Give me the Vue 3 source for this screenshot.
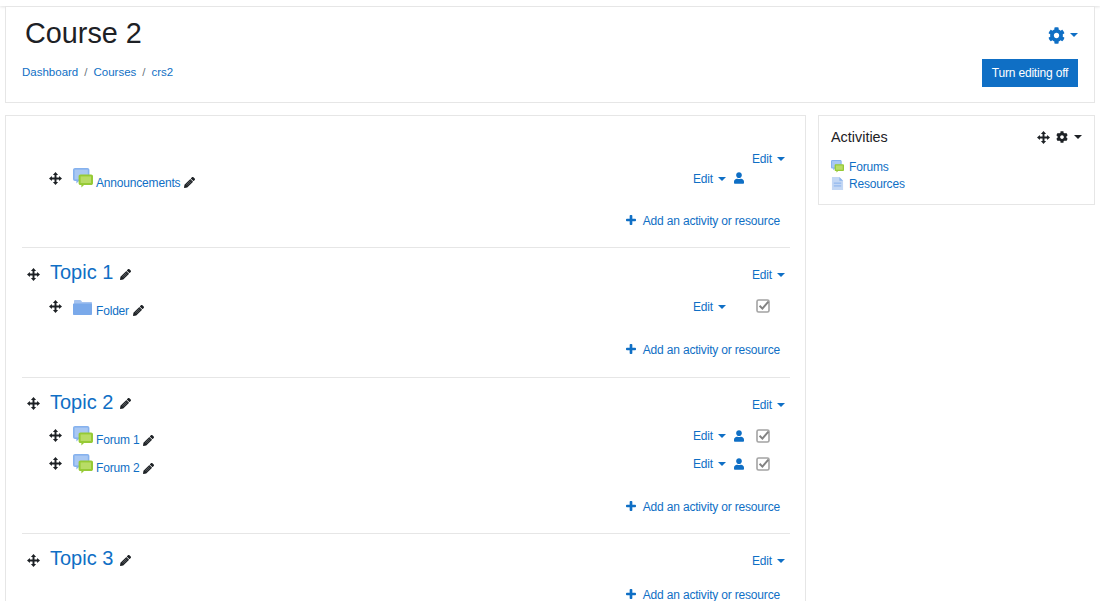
<script setup>
const sections = [
  { id: 0, title: '', acts: [{ name: 'Announcements', icon: 'forum', user: true, check: false }] },
  { id: 1, title: 'Topic 1', acts: [{ name: 'Folder', icon: 'folder', user: false, check: true }] },
  { id: 2, title: 'Topic 2', acts: [
    { name: 'Forum 1', icon: 'forum', user: true, check: true },
    { name: 'Forum 2', icon: 'forum', user: true, check: true }
  ] },
  { id: 3, title: 'Topic 3', acts: [] }
]
const crumbs = ['Dashboard', 'Courses', 'crs2']
</script>

<template>
  <div class="page">
    <svg class="defs" width="0" height="0" aria-hidden="true">
      <symbol id="i-cog" viewBox="0 0 512 512"><path d="M487.4 315.7l-42.6-24.6c4.3-23.2 4.3-47 0-70.2l42.6-24.6c4.9-2.8 7.1-8.6 5.5-14-11.1-35.6-30-67.8-54.7-94.6-3.8-4.1-10-5.1-14.8-2.3L380.8 110c-17.9-15.4-38.5-27.3-60.8-35.1V25.8c0-5.6-3.9-10.5-9.4-11.7-36.7-8.2-74.3-7.8-109.2 0-5.5 1.2-9.4 6.1-9.4 11.7V75c-22.2 7.9-42.8 19.8-60.8 35.1L88.7 85.5c-4.9-2.8-11-1.9-14.8 2.3-24.7 26.7-43.6 58.9-54.7 94.6-1.7 5.4.6 11.2 5.5 14L67.3 221c-4.3 23.2-4.3 47 0 70.2l-42.6 24.6c-4.9 2.8-7.1 8.6-5.5 14 11.1 35.6 30 67.8 54.7 94.6 3.8 4.1 10 5.1 14.8 2.3l42.6-24.6c17.9 15.4 38.5 27.3 60.8 35.1v49.2c0 5.6 3.9 10.5 9.4 11.7 36.7 8.2 74.3 7.8 109.2 0 5.5-1.2 9.4-6.1 9.4-11.7v-49.2c22.2-7.9 42.8-19.8 60.8-35.1l42.6 24.6c4.9 2.8 11 1.9 14.8-2.3 24.7-26.7 43.6-58.9 54.7-94.6 1.5-5.5-.7-11.3-5.6-14.1zM256 336c-44.1 0-80-35.9-80-80s35.9-80 80-80 80 35.9 80 80-35.9 80-80 80z"/></symbol>
      <symbol id="i-move" viewBox="0 0 24 24"><path d="M12 0l4.8 5.4h-3V10.2h4.8V7.2L24 12l-5.4 4.8v-3h-4.8v4.8h3L12 24l-4.8-5.4h3v-4.8H5.4v3L0 12l5.4-4.8v3h4.8V5.4h-3z"/></symbol>
      <symbol id="i-pencil" viewBox="0 0 512 512"><path d="M497.9 142.1l-46.1 46.1c-4.7 4.7-12.3 4.7-17 0l-111-111c-4.7-4.7-4.7-12.3 0-17l46.1-46.1c18.7-18.7 49.1-18.7 67.9 0l60.1 60.1c18.8 18.7 18.8 49.1 0 67.9zM284.2 99.8L21.6 362.4.4 483.9c-2.9 16.4 11.4 30.6 27.8 27.8l121.5-21.3 262.6-262.6c4.7-4.7 4.7-12.3 0-17l-111-111c-4.8-4.7-12.4-4.7-17.1 0z"/><path d="M110 360L300 170M150 400L340 210" stroke="#fff" stroke-width="22" fill="none" opacity=".55"/></symbol>
      <symbol id="i-user" viewBox="0 0 448 512"><path d="M224 256c70.7 0 128-57.3 128-128S294.7 0 224 0 96 57.3 96 128s57.3 128 128 128zm89.6 32h-16.7c-22.2 10.2-46.9 16-72.9 16s-50.6-5.8-72.9-16h-16.7C60.2 288 0 348.2 0 422.4V464c0 26.5 21.5 48 48 48h352c26.5 0 48-21.5 48-48v-41.6c0-74.2-60.2-134.4-134.4-134.4z"/></symbol>
      <symbol id="i-plus" viewBox="0 0 12 12"><path d="M4.4 1c0-.5.4-1 1-1h1.2c.6 0 1 .5 1 1v3.4H11c.5 0 1 .4 1 1v1.2c0 .6-.5 1-1 1H7.6V11c0 .5-.4 1-1 1H5.4c-.6 0-1-.5-1-1V7.6H1c-.5 0-1-.4-1-1V5.4c0-.6.5-1 1-1h3.4z"/></symbol>
      <symbol id="i-check" viewBox="0 0 14 14"><rect x="1" y="1" width="12" height="12" rx="1.6" fill="none" stroke="#a3a3a3" stroke-width="1.6"/><path d="M3.6 6.800l2.800 2.800 6-7" fill="none" stroke="#828282" stroke-width="2"/></symbol>
      <symbol id="i-forum" viewBox="0 0 20 20">
        <path d="M2 0h12.400c1.100 0 2 .9 2 2v9c0 1.100-.9 2-2 2H6l-2.600 2.600V13H2c-1.100 0-2-.9-2-2V2C0 .9.900 0 2 0z" fill="#86b2ee"/>
        <path d="M1.600 1.600h13.200v9.800H1.600z" fill="#a9c8f3"/>
        <path d="M7.400 6.400h10.800c1 0 1.800.8 1.800 1.800v7c0 1-.8 1.800-1.800 1.800H11L8.400 19.400V17H7.400c-1 0-1.800-.8-1.800-1.800v-7c0-1 .8-1.800 1.800-1.800z" fill="#96ca36"/>
        <rect x="7.600" y="8.400" width="10.400" height="6.600" fill="#b8dc66"/>
      </symbol>
      <symbol id="i-folder" viewBox="0 0 20 20">
        <path d="M1 5c0-.6.500-1 1-1h5c.5 0 .8.2 1.100.6l1 1.400h8.900c.6 0 1 .4 1 1v2H1z" fill="#a5c3f0"/>
        <path d="M1 7.600h17c.6 0 1 .4 1 1V18c0 .6-.4 1-1 1H1c-.6 0-1-.4-1-1V8.600c0-.6.4-1 1-1z" fill="#7aa9ea"/>
      </symbol>
      <symbol id="i-res" viewBox="0 0 14 14">
        <path d="M1 0h8l4 4v10H1z" fill="#c3d7f4"/>
        <path d="M9 0v4h4z" fill="#8db4ec"/>
        <rect x="3" y="6" width="8" height="1.200" fill="#8db4ec"/>
        <rect x="3" y="9" width="8" height="1.200" fill="#8db4ec"/>
      </symbol>
    </svg>

    <div class="topbar"></div>

    <header class="card head">
      <div class="head-left">
        <h1 class="course">Course 2</h1>
        <nav class="crumbs">
          <template v-for="(c, i) in crumbs" :key="c">
            <span v-if="i" class="sep">/</span>
            <a class="link">{{ c }}</a>
          </template>
        </nav>
      </div>
      <div class="head-right">
        <div class="gear-menu">
          <svg class="gear"><use href="#i-cog" /></svg>
          <span class="caret"></span>
        </div>
        <button class="btn">Turn editing off</button>
      </div>
    </header>

    <div class="columns">
      <main class="card course-body">
        <section v-for="s in sections" :key="s.id" class="section" :class="{ intro: !s.title }">
          <div class="sec-head">
            <template v-if="s.title">
              <svg class="move sec-move"><use href="#i-move" /></svg>
              <h3 class="sec-title">{{ s.title }}</h3>
              <svg class="pencil"><use href="#i-pencil" /></svg>
            </template>
            <a class="link edit sec-edit">Edit<span class="caret"></span></a>
          </div>

          <ul class="list" :class="{ empty: !s.acts.length }">
            <li v-for="a in s.acts" :key="a.name" class="act">
              <svg class="move act-move"><use href="#i-move" /></svg>
              <svg class="act-icon"><use :href="'#i-' + a.icon" /></svg>
              <a class="link act-name">{{ a.name }}</a>
              <svg class="pencil act-pencil"><use href="#i-pencil" /></svg>
              <a class="link edit act-edit">Edit<span class="caret"></span></a>
              <span class="slot-user"><svg v-if="a.user" class="user"><use href="#i-user" /></svg></span>
              <span class="slot-check"><svg v-if="a.check" class="check"><use href="#i-check" /></svg></span>
            </li>
          </ul>

          <div class="add">
            <svg class="plus"><use href="#i-plus" /></svg>
            <a class="link add-link">Add an activity or resource</a>
          </div>
        </section>
      </main>

      <aside class="card block">
        <div class="block-head">
          <h4 class="block-title">Activities</h4>
          <svg class="move block-move"><use href="#i-move" /></svg>
          <svg class="block-cog"><use href="#i-cog" /></svg>
          <span class="caret dark"></span>
        </div>
        <ul class="block-list">
          <li><svg class="mini"><use href="#i-forum" /></svg><a class="link">Forums</a></li>
          <li><svg class="mini"><use href="#i-res" /></svg><a class="link">Resources</a></li>
        </ul>
      </aside>
    </div>
  </div>
</template>

<style>
html, body { margin: 0; background: #fff; overflow: hidden; }
</style>

<style scoped>
.page {
  height: 601px;
  overflow: hidden;
  box-sizing: border-box;
  padding: 0 5px;
  width: 1100px;
  font-family: "Liberation Sans", Arial, sans-serif;
  font-size: 12px;
  letter-spacing: -0.18px;
  color: #1d2125;
  background: #fff;
}
.defs { position: absolute; }
.topbar {
  height: 6px;
  margin: 0 -5px;
  box-shadow: 0 1px 3px rgba(0, 0, 0, 0.12);
}
.card {
  border: 1px solid #e6e6e6;
  box-sizing: border-box;
  background: #fff;
}
.link { color: #0f6fc5; text-decoration: none; }
.head {
  display: flex;
  justify-content: space-between;
  height: 97px;
  width: 1090px;
  padding: 0 16px;
}
.course {
  margin: 10px 0 0 3px;
  font-size: 28.8px;
  font-weight: 400;
  line-height: 33px;
  letter-spacing: 0;
}
.crumbs {
  margin-top: 14px;
  display: flex;
  align-items: center;
  height: 16px;
  font-size: 11.5px;
  letter-spacing: 0;
}
.sep { color: #6a737b; margin: 0 6px; }
.head-right {
  display: flex;
  flex-direction: column;
  align-items: flex-end;
}
.gear-menu {
  display: flex;
  align-items: center;
  height: 18px;
  margin-top: 19px;
}
.gear { width: 17px; height: 17px; fill: #0f6fc5; }
.caret {
  display: inline-block;
  width: 0;
  height: 0;
  border-top: 4px solid #0f6fc5;
  border-left: 4px solid transparent;
  border-right: 4px solid transparent;
  margin-left: 5px;
  vertical-align: 2px;
}
.caret.dark { border-top-color: #1d2125; }
.btn {
  margin-top: 15px;
  width: 96px;
  height: 28px;
  border: 0;
  padding: 0;
  background: #0f6fc5;
  color: #fff;
  font: inherit;
  letter-spacing: inherit;
}
.columns {
  display: flex;
  gap: 12px;
  align-items: flex-start;
  margin-top: 12px;
}
.course-body {
  width: 801px;
  height: 600px;
  padding: 0 15px 0 16px;
}
.section {
  padding: 14px 0 17.6px;
  border-bottom: 1px solid #e6e6e6;
}
.section.intro { padding: 37px 0 17px; }
.sec-head {
  display: flex;
  align-items: center;
  height: 24px;
  padding-right: 5px;
}
.intro .sec-head { height: 10px; }
.move { width: 13px; height: 13px; fill: #1d2125; flex: none; }
.sec-move { margin-left: 5px; }
.sec-title {
  margin: 0 0 3px 10px;
  font-size: 20px;
  font-weight: 400;
  letter-spacing: 0;
  color: #0f6fc5;
}
.pencil { width: 11px; height: 11px; fill: #1d2125; flex: none; }
.sec-title + .pencil { margin-left: 7px; }
.edit { white-space: nowrap; }
.sec-edit { margin-left: auto; padding-top: 2px; }
.list { list-style: none; margin: 0; padding: 6.5px 0 19.5px; }
.intro .list { padding: 1.5px 0 18.5px; }
.list.empty { padding: 0; height: 12px; }
.act {
  display: flex;
  align-items: center;
  height: 27px;
}
.act + .act { margin: 1px 0 -1px; }
.act-move { margin-left: 27px; }
.act-icon { width: 20px; height: 20px; margin-left: 11px; flex: none; }
.act-name { margin-left: 3px; padding-top: 9.5px; }
.act-pencil { margin: 9px 0 0 4px; }
.act-edit { margin-left: auto; padding-top: 1px; }
.slot-user {
  width: 11px;
  height: 12px;
  margin-left: 7px;
  display: flex;
  justify-content: center;
}
.user { width: 10px; height: 12px; fill: #0f6fc5; }
.slot-check {
  width: 14px;
  height: 14px;
  margin: 0 20px 0 12px;
}
.check { width: 14px; height: 14px; display: block; }
.add {
  display: flex;
  align-items: center;
  justify-content: flex-end;
  height: 20px;
  padding-right: 10px;
}
.add-link { padding-top: 2px; }
.plus { width: 10px; height: 10px; fill: #0f6fc5; margin-right: 7px; }
.block {
  width: 277px;
  height: 90px;
  padding: 0 12px;
}
.block-head {
  display: flex;
  align-items: center;
  height: 42px;
}
.block-title { margin: 0; font-size: 14.4px; font-weight: 400; letter-spacing: 0; }
.block-move { margin-left: auto; }
.block-cog { width: 12px; height: 12px; margin-left: 6px; fill: #1d2125; }
.block-head .caret { margin-right: 0; margin-left: 6px; }
.block-list { list-style: none; margin: 0; padding: 0; }
.block-list li {
  display: flex;
  align-items: center;
  height: 17px;
}
.mini { width: 13px; height: 13px; margin-right: 5px; }
</style>
